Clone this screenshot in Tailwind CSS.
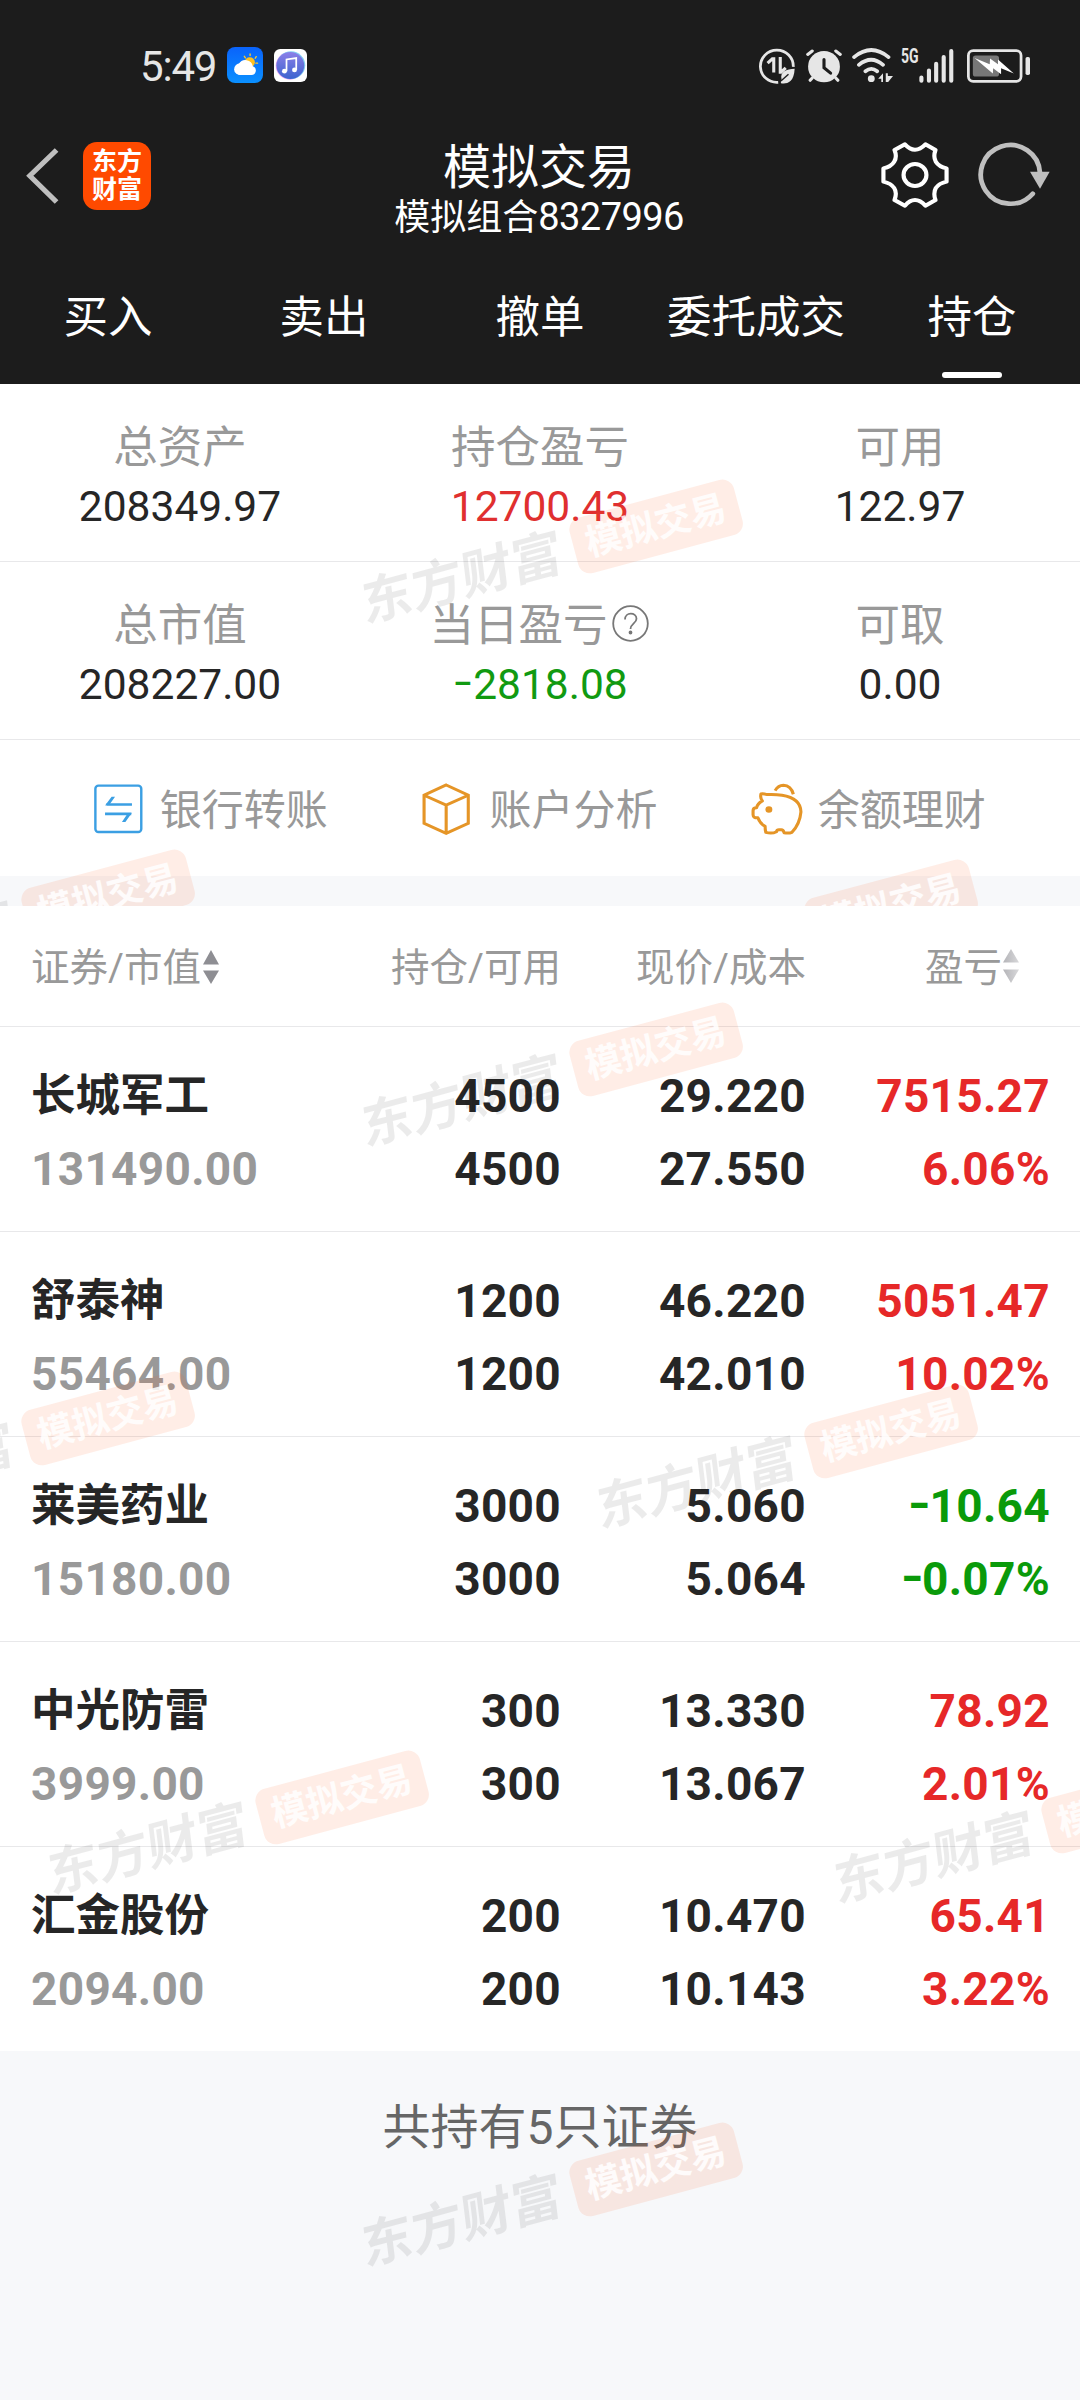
<!DOCTYPE html>
<html lang="zh-CN">
<head>
    <meta charset="UTF-8">
    <meta name="viewport" content="width=device-width, initial-scale=1.0">
    <title>模拟交易</title>
    <script src="https://cdn.jsdelivr.net/npm/@tailwindcss/browser@4"></script>
    <style>
        body {
            font-family: Roboto, 'Noto Sans CJK SC', sans-serif;
        }
    </style>
</head>
<body class="relative w-[1080px] h-[2400px] overflow-hidden bg-[#f7f8fa] text-[#262626]">
    <header class="h-[384px] bg-[#1c1c1c] text-white">
        <!-- Status bar -->
        <div class="h-[130px] pl-[140px] pr-[50px] flex items-center justify-between text-[#e6e6e6]">
            <div class="flex items-center">
                <span class="w-[87px] text-[42px] leading-[50px] tracking-[-1.2px] pt-1">5:49</span>
                <svg class="w-[36px] h-[36px]" viewBox="658 80 106 109" preserveAspectRatio="none">
                    <defs>
                        <linearGradient id="sky" x1="0" y1="0" x2="0" y2="1"><stop offset="0" stop-color="#0a63fb"/><stop offset="1" stop-color="#0a90ff"/></linearGradient>
                        <linearGradient id="note" x1="0" y1="0" x2="0" y2="1"><stop offset="0" stop-color="#8b7fe8"/><stop offset="1" stop-color="#3d63cf"/></linearGradient>
                    </defs>
                    <rect x="658" y="80" width="106" height="109" rx="24" fill="url(#sky)"/>
                    <path d="M726 101v5M709 108l3 5M744 109l-3 5M748 129h-5" stroke="#ffc928" stroke-width="4" stroke-linecap="round"/>
                    <circle cx="725" cy="126" r="15" fill="#ffc01e"/>
                    <path d="M697 165a18 18 0 0 1-4-34a22 22 0 0 1 41 7a14 14 0 0 1-4 27z" fill="#fff"/>
                    <circle cx="697" cy="147" r="18" fill="#fff"/>
                </svg>
                <svg class="w-[33px] h-[33px] ml-[11px] mt-[1px]" viewBox="796 87 95 98" preserveAspectRatio="none">
                    <rect x="796" y="87" width="95" height="98" rx="18" fill="#fff"/>
                    <circle cx="842" cy="137" r="41" fill="#e79bf3"/>
                    <circle cx="845" cy="135" r="41" fill="#7fd0f5"/>
                    <circle cx="843" cy="136" r="40" fill="url(#note)"/>
                    <path d="M832 153v-35l28-4v35" fill="none" stroke="#fff" stroke-width="5"/>
                    <circle cx="826" cy="153" r="7" fill="#fff"/><circle cx="855" cy="149" r="7" fill="#fff"/>
                </svg>
            </div>
            <div class="flex items-center mt-[1px]">
                <!-- data saver -->
                <svg class="w-[36px] h-[37px]" viewBox="636 83 105 110" preserveAspectRatio="none" fill="none" stroke="#e6e6e6">
                    <path d="M692 188A48 48 0 1 1 736 142" stroke-width="8"/>
                    <path d="M661 131l14-13h4v41M714 145l-14 13h-2v-45" stroke-width="9"/>
                    <path d="M740 148c-24 2-44 8-38 32c-3 5-2 8-2 11c14 2 38 2 40-43z" fill="#e6e6e6" stroke="none"/>
                    <path d="M700 184l22-20" stroke="#1c1c1c" stroke-width="4"/>
                </svg>
                <!-- alarm -->
                <svg class="w-[36px] h-[34px] ml-[11px]" viewBox="774 87 104 100" preserveAspectRatio="none" fill="none" stroke="#e6e6e6" stroke-width="9" stroke-linecap="round">
                    <circle cx="826" cy="139" r="46" fill="#e6e6e6" stroke="none"/>
                    <path d="M779 103l13-10M873 103l-13-10M786 179l6-7M866 179l-6-7"/>
                    <path d="M826 118v24l19 16" stroke="#1c1c1c" stroke-width="9"/>
                </svg>
                <!-- wifi -->
                <svg class="w-[41px] h-[35px] ml-[10px]" viewBox="907 82 119 104" preserveAspectRatio="none" fill="none" stroke="#e6e6e6" stroke-width="11" stroke-linecap="round">
                    <path d="M913 109Q963 67 1013 109M927 132Q963 102 997 132M946 151Q963 137 980 151"/>
                    <circle cx="963" cy="173" r="10" fill="#e6e6e6" stroke="none"/>
                    <path d="M983 173l14-16v26h-5v-10zM1005 157h6v8h15l-14 18h-7z" fill="#e6e6e6" stroke="none"/>
                </svg>
                <span class="w-[18px] ml-[8px] mb-[19px] text-[20px] leading-[18px] font-bold scale-x-70 origin-left">5G</span>
                <!-- signal -->
                <svg class="w-[35px] h-[34px]" viewBox="1101 84 102 101" preserveAspectRatio="none" stroke="#e6e6e6" stroke-width="12" stroke-linecap="round">
                    <path d="M1108 169v9M1130 148v30M1151 128v50M1173 108v70M1195 90v88"/>
                </svg>
                <!-- battery -->
                <svg class="w-[63px] h-[34px] ml-[13px]" viewBox="1240 86 183 101" preserveAspectRatio="none">
                    <rect x="1244" y="91" width="153" height="91" rx="14" fill="none" stroke="#e6e6e6" stroke-width="8"/>
                    <rect x="1257" y="105" width="76" height="63" rx="8" fill="#777"/>
                    <rect x="1410" y="110" width="13" height="53" rx="5" fill="#e6e6e6"/>
                    <path d="M1262 113l44 18 1-17 23 17v-14l46 42-37-16v18l-23-18-1 16z" fill="#fff"/>
                </svg>
            </div>
        </div>

        <!-- Title bar -->
        <div class="h-[124px] flex">
            <div class="w-[395px] flex pt-[12px]">
                <svg class="w-[33px] h-[56px] ml-[26px] mt-[6px]" viewBox="77 383 96 168" preserveAspectRatio="none" fill="none" stroke="#bfbfbf" stroke-width="15">
                    <path d="M166 389L88 466L166 545"/>
                </svg>
                <div class="w-[68px] h-[68px] ml-[24px] pt-[6px] rounded-[14px] bg-[#ff4a00] text-center text-[25px] leading-[28px] font-bold">东方<br>财富</div>
            </div>
            <div class="w-[290px] text-center whitespace-nowrap">
                <h1 class="text-[48px] leading-[58px] pt-[9px] pr-[2px]">模拟交易</h1>
                <p class="text-[36px] leading-[40px] -mx-2 pr-[2px]">模拟组合<span class="text-[38px] tracking-[-0.6px]">8327996</span></p>
            </div>
            <div class="w-[395px] flex justify-end pt-[12px] pr-[30px]">
                <svg class="w-[68px] h-[66px]" viewBox="991 367 196 198" preserveAspectRatio="none" fill="none" stroke="#fff" stroke-width="12" stroke-linejoin="round">
                    <path d="M1060 374Q1074 390 1089 390Q1104 390 1119 374L1148 391Q1141 412 1149 426Q1158 441 1180 446V486Q1158 491 1149 505Q1141 520 1148 541L1119 558Q1104 541 1089 541Q1074 541 1060 558L1030 541Q1038 520 1029 505Q1020 491 998 486V446Q1020 441 1029 426Q1038 412 1030 391Z"/>
                    <circle cx="1089" cy="466" r="33"/>
                </svg>
                <svg class="w-[72px] h-[66px] ml-[29px]" viewBox="1273 367 209 198" preserveAspectRatio="none" fill="none" stroke="#bfbfbf" stroke-width="14">
                    <path d="M1432 522A86 88 0 1 1 1453 460" stroke-linecap="round"/>
                    <path d="M1424 456h57l-28 51z" fill="#bfbfbf" stroke="none"/>
                </svg>
            </div>
        </div>

        <!-- Tabs -->
        <nav class="h-[130px] grid grid-cols-5 text-center text-[44.5px] leading-[60px] pt-[34px]">
            <a>买入</a>
            <a>卖出</a>
            <a>撤单</a>
            <a>委托成交</a>
            <a class="flex flex-col items-center">持仓<span class="w-[60px] h-[6px] mt-[24px] rounded-full bg-white"></span></a>
        </nav>
    </header>

    <main>
        <!-- Account summary -->
        <section id="summary" class="bg-white"></section>

        <!-- Shortcuts -->
        <section class="h-[136px] px-[46px] pt-[1px] grid grid-cols-3 items-center bg-white text-[42px] leading-[60px] text-[#999]">
            <a class="flex items-center justify-center">
                <svg class="w-[49px] h-[50px] mr-[17px]" viewBox="276 130 142 149" preserveAspectRatio="none" fill="none" stroke="#3b9fe3" stroke-width="7">
                    <rect x="280" y="135" width="133" height="138" rx="9"/>
                    <path d="M386 191H312M308 219H384" stroke-width="8"/>
                    <path d="M308 194l19-26h10l-16 23zM386 216l-19 27h-10l16-24z" fill="#3b9fe3" stroke="none"/>
                </svg>
                <span class="mt-[4px]">银行转账</span>
            </a>
            <a class="flex items-center justify-center">
                <svg class="w-[48px] h-[52px] mr-[19px]" viewBox="1232 126 139 157" preserveAspectRatio="none" fill="none" stroke="#e59527" stroke-width="9">
                    <path d="M1302 132L1366 163V248L1302 278L1238 248V163ZM1238 163L1302 193L1366 163M1302 193V278"/>
                </svg>
                <span class="mt-[4px]">账户分析</span>
            </a>
            <a class="flex items-center justify-center pr-[2px]">
                <svg class="w-[52px] h-[52px] mr-[15px]" viewBox="615 126 151 157" preserveAspectRatio="none" fill="none" stroke="#e59527" stroke-width="9" stroke-linejoin="round">
                    <path d="M644 159q5-2 18 2q25-1 43 2q54 9 55 50q-3 36-26 62q-10 4-23 1q-2-9-8-9h-7q-6 0-7 6q-13 7-31 2q-2-8-2-18q-15-9-21-26q-14 1-14-9v-12q0-9 10-9q3-13 17-21q-7-8-4-21z"/>
                    <path d="M685 149q9-16 24-16q22 1 29 27"/>
                    <circle cx="667" cy="206" r="10" fill="#e59527" stroke="none"/>
                </svg>
                <span class="mt-[4px]">余额理财</span>
            </a>
        </section>

        <!-- Holdings -->
        <section class="mt-[30px] bg-white">
            <div class="h-[121px] px-[31px] grid grid-cols-[270px_260px_245px_244px] items-center border-b border-[#e8e8ea] text-[38.5px] leading-[60px] text-[#999] text-right whitespace-nowrap">
                <span class="flex items-center pt-[4px]">证券/市值
                    <svg class="w-[16px] h-[34px] ml-[2px] mb-[2px]" viewBox="0 0 16 35" preserveAspectRatio="none" fill="#8e8e93"><path d="M8 0l8 15H0zM8 35l8-14H0z"/></svg>
                </span>
                <span class="pt-[4px]">持仓/可用</span>
                <span class="pt-[4px]">现价/成本</span>
                <span class="flex items-center justify-end pt-[4px] pr-[31px]">盈亏
                    <svg class="w-[16px] h-[34px] ml-[1px] mb-[5px]" viewBox="0 0 16 35" preserveAspectRatio="none"><defs><linearGradient id="fade"><stop offset="0" stop-color="#b4b4b8"/><stop offset="1" stop-color="#d8d8da"/></linearGradient></defs><path d="M8 0l8 14H0zM8 35l8-14H0z" fill="url(#fade)"/></svg>
                </span>
            </div>
            <div id="holdings"></div>
        </section>

        <p class="pt-[47px] text-center text-[48px] leading-[60px] text-[#666]">共持有5只证券</p>
    </main>

    <!-- Watermarks lie over the page -->
    <div id="marks" class="absolute inset-0 overflow-hidden pointer-events-none"></div>
    <div id="marks-top" class="absolute left-0 top-0 w-[1080px] h-[906px] overflow-hidden pointer-events-none"></div>

    <script>
        const summary = [
            [["总资产", "208349.97", ""], ["持仓盈亏", "12700.43", "text-[#e02f2f]"], ["可用", "122.97", ""]],
            [["总市值", "208227.00", ""], ["当日盈亏", "-2818.08", "text-[#119a11]"], ["可取", "0.00", ""]]
        ];

        // name, market value, held, available, price, cost, profit, rate
        const holdings = [
            ["长城军工", "131490.00", "4500", "4500", "29.220", "27.550", "7515.27", "6.06%"],
            ["舒泰神", "55464.00", "1200", "1200", "46.220", "42.010", "5051.47", "10.02%"],
            ["莱美药业", "15180.00", "3000", "3000", "5.060", "5.064", "-10.64", "-0.07%"],
            ["中光防雷", "3999.00", "300", "300", "13.330", "13.067", "78.92", "2.01%"],
            ["汇金股份", "2094.00", "200", "200", "10.470", "10.143", "65.41", "3.22%"]
        ];

        // Centre of each watermark badge
        const marks = [[656, 526], [656, 1049], [108, 1418], [891, 1431], [342, 1797], [1128, 1806], [656, 2169]];
        const topMarks = [[108, 896], [891, 906]];

        const help = `<svg class="w-[37px] h-[37px] ml-[4px] mr-[2px] mb-[5px]" viewBox="0 0 37 37" fill="none" stroke="#777" stroke-width="1.8"><circle cx="18.5" cy="18.5" r="17.3"/><path d="M13 14.5c0-8 11.500-7.500 11.500-.8c0 4.500-6 5-6 10.300"/><circle cx="18.500" cy="27.500" r="1" fill="#777"/></svg>`;

        // Short minus sign
        const minus = text => text.replace('-', '<span class="inline-block scale-x-70 origin-right -ml-[7px]">–</span>');

        document.getElementById('summary').innerHTML = summary.map(row => `
            <div class="h-[178px] grid grid-cols-3 border-b border-[#e8e8ea] pt-[34px] text-center">
                ${row.map(([label, value, color]) => `
                    <div>
                        <div class="h-[60px] flex items-center justify-center text-[44.5px] leading-[60px] text-[#999]">${label}${label === "当日盈亏" ? help : ''}</div>
                        <div class="text-[42.5px] leading-[58px] ${color}">${minus(value)}</div>
                    </div>`).join('')}
            </div>`).join('');

        document.getElementById('holdings').innerHTML = holdings.map(h => `
            <div class="h-[205px] px-[31px] pt-[33px] grid grid-cols-[270px_260px_245px_244px] border-b border-[#e8e8ea] last:border-b-0 last:h-[204px] text-[46px] leading-[73px] font-bold tracking-[0.3px] text-right whitespace-nowrap">
                <div class="text-left"><div class="text-[44.5px] tracking-normal">${h[0]}</div><div class="text-[#999]">${h[1]}</div></div>
                <div>${h[2]}<br>${h[3]}</div>
                <div>${h[4]}<br>${h[5]}</div>
                <div class="${h[6].startsWith('-') ? 'text-[#0a9a0a]' : 'text-[#e62828]'}">${minus(h[6])}<br>${minus(h[7])}</div>
            </div>`).join('');

        function drawMarks(id, points) {
            document.getElementById(id).innerHTML = points.map(([x, y]) => `
                <div class="absolute" style="left:${x}px;top:${y}px">
                    <div class="absolute right-[-85px] top-[-29px] w-[389px] h-[58px] flex items-center justify-between whitespace-nowrap rotate-[-15deg] origin-[304px_29px]">
                        <span class="text-[51.5px] leading-[58px] pt-[2px] font-bold text-black/8 skew-x-[-8deg]">东方财富</span>
                        <span class="w-[170px] h-[57px] rounded-[12px] bg-[#ff5a1e]/11 text-center text-[36px] leading-[57px] font-bold text-white/85">模拟交易</span>
                    </div>
                </div>`).join('');
        }
        drawMarks('marks', marks);
        drawMarks('marks-top', topMarks);
    </script>
</body>
</html>
